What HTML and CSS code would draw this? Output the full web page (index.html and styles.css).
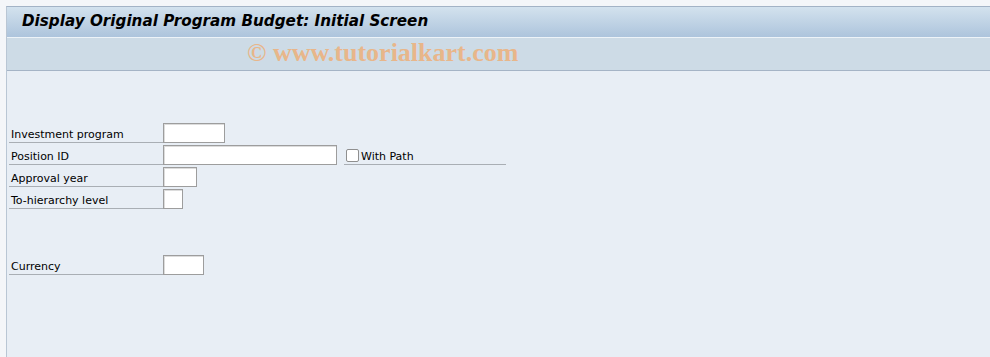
FILE: index.html
```html
<!DOCTYPE html>
<html>
<head>
<meta charset="utf-8">
<link rel="stylesheet" href="styles.css">
</head>
<body>
<div class="frame">
  <div class="titlebar"><h1 class="title">Display Original Program Budget: Initial Screen</h1></div>
  <div class="toolbar"><span class="watermark">© www.tutorialkart.com</span></div>
  <div class="content">
    <div class="form">
      <div class="row"><label class="lbl">Investment program</label><span class="inp w62"></span></div>
      <div class="row"><label class="lbl">Position ID</label><span class="inp w174"></span><span class="chk-wrap"><span class="chk"></span><span class="chk-text">With Path</span></span></div>
      <div class="row"><label class="lbl">Approval year</label><span class="inp w34"></span></div>
      <div class="row"><label class="lbl">To-hierarchy level</label><span class="inp w20"></span></div>
      <div class="row gap"><label class="lbl">Currency</label><span class="inp w41"></span></div>
    </div>
  </div>
</div>
</body>
</html>
```
FILE: styles.css
```css
html, body { margin: 0; padding: 0; }
body {
  width: 990px; height: 357px; overflow: hidden;
  background: #f4f6f9;
  font-family: Tahoma, "DejaVu Sans", sans-serif;
}
.frame {
  margin: 6px 0 0 6px;
  height: 351px;
  border-left: 1px solid #b9c6d4;
  border-top: 1px solid #a3b3c6;
  display: flex; flex-direction: column;
  background: #e8eef5;
}
.titlebar {
  box-sizing: border-box;
  height: 31px;
  padding-bottom: 2px;
  background: linear-gradient(#d3e2ee, #adc4dc);
  border-bottom: 1px solid #edf3f8;
  display: flex; align-items: center;
}
.title {
  margin: 0 0 0 15px;
  font-family: "DejaVu Sans", sans-serif;
  font-weight: bold; font-style: italic;
  font-size: 15.2px; color: #000;
}
.toolbar {
  height: 32px;
  background: #cddbe6;
  border-bottom: 1px solid #a5b4c6;
  display: flex; align-items: center;
}
.watermark {
  margin-left: 240px;
  margin-top: -3px;
  font-family: "Liberation Serif", serif;
  font-weight: bold; font-size: 26px;
  color: #e8b68a;
}
.content { flex: 1; padding: 52px 0 0 2px; }
.form { display: flex; flex-direction: column; gap: 2px; }
.row { display: flex; align-items: flex-end; height: 20px; }
.row.gap { margin-top: 44px; }
.lbl {
  width: 152px; height: 17px;
  padding: 2px 0 0 2px;
  border-bottom: 1px solid #a9aeb4;
  font-family: "DejaVu Sans", sans-serif;
  font-size: 11px; color: #000;
  line-height: 19px;
}
.inp {
  box-sizing: border-box; height: 20px;
  background: #fff;
  border: 1px solid #9d9d9d;
  box-shadow: inset 1px 1px 0 #dcdcdc;
  align-self: flex-start;
}
.w62 { width: 62px; } .w174 { width: 174px; } .w34 { width: 34px; } .w20 { width: 20px; } .w41 { width: 41px; }
.chk-wrap {
  box-sizing: border-box;
  margin-left: 7px; width: 162px; height: 20px;
  padding-top: 1px;
  border-bottom: 1px solid #a9aeb4;
  display: flex; align-items: center;
}
.chk {
  box-sizing: border-box; width: 13px; height: 13px;
  margin-left: 2px;
  background: #fff; border: 1px solid #8f8f8f; border-radius: 2px;
}
.chk-text {
  margin-left: 2px;
  padding-top: 2px;
  font-family: "DejaVu Sans", sans-serif;
  font-size: 11px;
}
```
